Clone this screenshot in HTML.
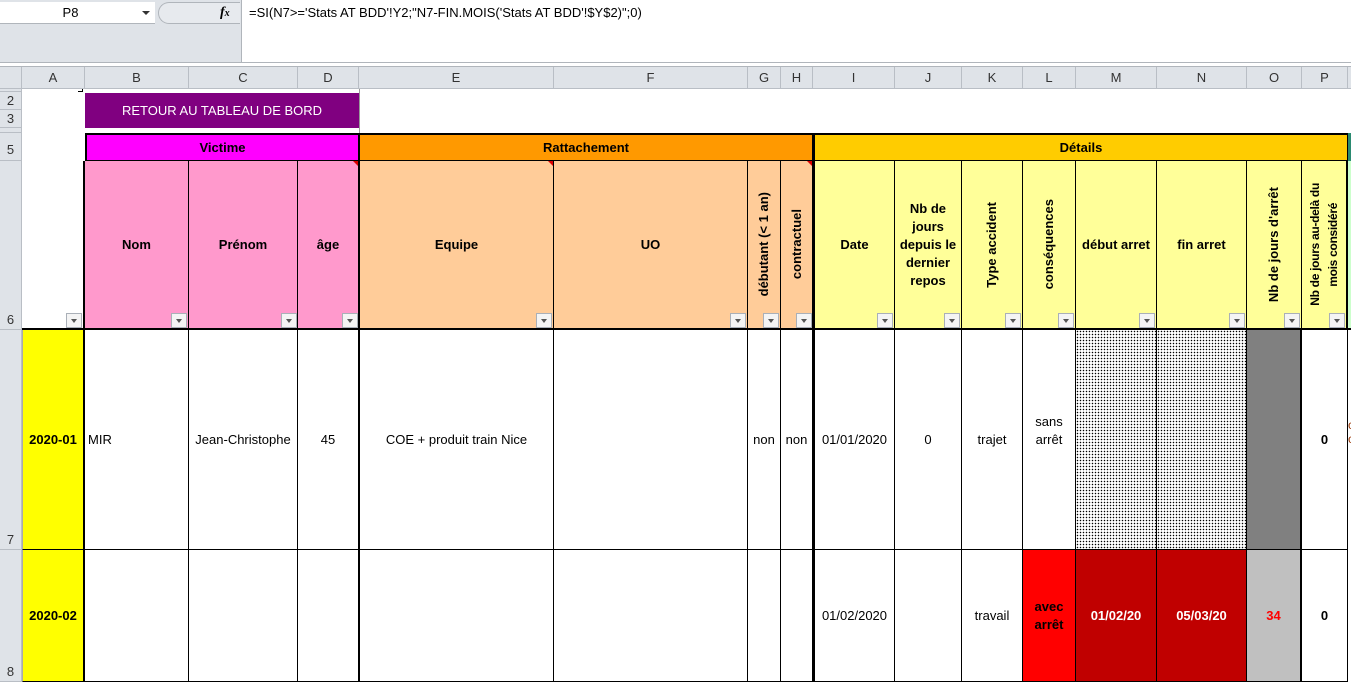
<!DOCTYPE html>
<html><head><meta charset="utf-8"><style>
*{margin:0;padding:0;box-sizing:border-box}
body{width:1351px;height:682px;overflow:hidden;background:#fff;position:relative;font-family:"Liberation Sans",Arial,sans-serif;font-size:13px;color:#000}
.a{position:absolute}
.c{position:absolute;display:flex;align-items:center;justify-content:center;text-align:center;border-right:1px solid #000;border-bottom:1px solid #000;line-height:18px}
.h{position:absolute;display:flex;align-items:center;justify-content:center;background:#dfe3e8;border-right:1px solid #b9bec5;border-bottom:1px solid #b9bec5;font-size:13px;color:#333}
.b{font-weight:bold}
.v{writing-mode:vertical-rl;transform:rotate(180deg);font-weight:bold;line-height:18px}
.dd{position:absolute;width:16px;height:15px;background:#f4f4f4;border:1px solid #aab0b8}
.dd:after{content:"";position:absolute;left:4px;top:5px;border-left:3px solid transparent;border-right:3px solid transparent;border-top:4px solid #555}
.dot{background-color:#fff;background-image:radial-gradient(#000 0.6px,transparent 0.9px);background-size:3px 3px}
.tri{position:absolute;width:0;height:0;border-left:5px solid transparent;border-top:5px solid #d00}
</style></head><body>
<div class="a" style="left:0;top:0;width:1351px;height:63px;background:#dfe3e8;border-bottom:1px solid #b0b5bb"></div>
<div class="a" style="left:0;top:2px;width:155px;height:22px;background:#fff;border-bottom:1px solid #b0b5bb;font-size:13px;text-align:center;line-height:22px;padding-right:14px">P8</div>
<div class="a" style="left:142px;top:11px;border-left:4px solid transparent;border-right:4px solid transparent;border-top:4px solid #333"></div>
<div class="a" style="left:158px;top:2px;width:82px;height:22px;background:#e7eaee;border-radius:11px 0 0 11px;border:1px solid #b0b5bb;border-right:none"></div>
<div class="a" style="left:220px;top:5px;font-family:'Liberation Serif',serif;font-style:italic;font-weight:bold;font-size:14px">f<span style="font-size:10px">x</span></div>
<div class="a" style="left:241px;top:0;width:1110px;height:63px;background:#fff;border-left:1px solid #b0b5bb;border-bottom:1px solid #b0b5bb;padding:5px 0 0 7px;font-size:13px">=SI(N7&gt;='Stats AT BDD'!Y2;"N7-FIN.MOIS('Stats AT BDD'!$Y$2)";0)</div>
<div class="a" style="left:0;top:63px;width:1351px;height:4px;background:#fff;border-bottom:1px solid #b0b5bb"></div>
<div class="h" style="left:0;top:67px;width:22px;height:22px"></div>
<div class="h" style="left:22px;top:67px;width:63px;height:22px">A</div>
<div class="h" style="left:85px;top:67px;width:104px;height:22px">B</div>
<div class="h" style="left:189px;top:67px;width:109px;height:22px">C</div>
<div class="h" style="left:298px;top:67px;width:61px;height:22px">D</div>
<div class="h" style="left:359px;top:67px;width:195px;height:22px">E</div>
<div class="h" style="left:554px;top:67px;width:194px;height:22px">F</div>
<div class="h" style="left:748px;top:67px;width:33px;height:22px">G</div>
<div class="h" style="left:781px;top:67px;width:32px;height:22px">H</div>
<div class="h" style="left:813px;top:67px;width:82px;height:22px">I</div>
<div class="h" style="left:895px;top:67px;width:67px;height:22px">J</div>
<div class="h" style="left:962px;top:67px;width:61px;height:22px">K</div>
<div class="h" style="left:1023px;top:67px;width:53px;height:22px">L</div>
<div class="h" style="left:1076px;top:67px;width:81px;height:22px">M</div>
<div class="h" style="left:1157px;top:67px;width:90px;height:22px">N</div>
<div class="h" style="left:1247px;top:67px;width:55px;height:22px">O</div>
<div class="h" style="left:1302px;top:67px;width:46px;height:22px">P</div>
<div class="h" style="left:1348px;top:67px;width:10px;height:22px"></div>
<div class="h" style="left:0;top:89px;width:22px;height:3px"></div>
<div class="h" style="left:0;top:92px;width:22px;height:18px">2</div>
<div class="h" style="left:0;top:110px;width:22px;height:18px">3</div>
<div class="h" style="left:0;top:128px;width:22px;height:5px"></div>
<div class="h" style="left:0;top:133px;width:22px;height:28px;padding-top:6px">5</div>
<div class="h" style="left:0;top:161px;width:22px;height:169px;align-items:flex-end;padding-bottom:2px">6</div>
<div class="h" style="left:0;top:330px;width:22px;height:220px;align-items:flex-end;padding-bottom:2px">7</div>
<div class="h" style="left:0;top:550px;width:22px;height:132px;align-items:flex-end;padding-bottom:2px">8</div>
<div class="a" style="left:359px;top:89px;width:1px;height:44px;background:#999"></div>
<div class="a" style="left:85px;top:93px;width:274px;height:35px;background:#800080;color:#fff;font-size:13px;display:flex;align-items:center;justify-content:center">RETOUR AU TABLEAU DE BORD</div>
<div class="a" style="left:78px;top:89px;width:5px;height:3px;border-bottom:1px solid #000;border-right:1px solid #000"></div>
<div class="c b" style="left:85px;top:133px;width:274px;height:28px;background:#ff00ff;border-top:2px solid #000;border-left:2px solid #000">Victime</div>
<div class="c b" style="left:359px;top:133px;width:454px;height:28px;background:#ff9900;border-top:2px solid #000;border-left:1px solid #000">Rattachement</div>
<div class="c b" style="left:813px;top:133px;width:535px;height:28px;background:#ffcc00;border-top:2px solid #000;border-left:2px solid #000">Détails</div>
<div class="a" style="left:1348px;top:133px;width:3px;height:28px;background:#2a8a70"></div>
<div class="c" style="left:22px;top:161px;width:63px;height:169px;border-right:2px solid #000;border-bottom:2px solid #000"></div>
<div class="c b" style="left:85px;top:161px;width:104px;height:169px;background:#ff99cc;border-bottom:2px solid #000">Nom</div>
<div class="c b" style="left:189px;top:161px;width:109px;height:169px;background:#ff99cc;border-bottom:2px solid #000">Prénom</div>
<div class="c b" style="left:298px;top:161px;width:61px;height:169px;background:#ff99cc;border-bottom:2px solid #000">âge</div>
<div class="c b" style="left:359px;top:161px;width:195px;height:169px;background:#ffcc99;border-left:1px solid #000;border-bottom:2px solid #000">Equipe</div>
<div class="c b" style="left:554px;top:161px;width:194px;height:169px;background:#ffcc99;border-bottom:2px solid #000">UO</div>
<div class="c" style="left:748px;top:161px;width:33px;height:169px;background:#ffcc99;border-bottom:2px solid #000"><span class="v">débutant (&lt; 1 an)</span></div>
<div class="c" style="left:781px;top:161px;width:32px;height:169px;background:#ffcc99;border-bottom:2px solid #000"><span class="v">contractuel</span></div>
<div class="c b" style="left:813px;top:161px;width:82px;height:169px;background:#ffff99;border-left:2px solid #000;border-bottom:2px solid #000">Date</div>
<div class="c b" style="left:895px;top:161px;width:67px;height:169px;background:#ffff99;border-bottom:2px solid #000">Nb de<br>jours<br>depuis le<br>dernier<br>repos</div>
<div class="c" style="left:962px;top:161px;width:61px;height:169px;background:#ffff99;border-bottom:2px solid #000"><span class="v">Type accident</span></div>
<div class="c" style="left:1023px;top:161px;width:53px;height:169px;background:#ffff99;border-bottom:2px solid #000"><span class="v">conséquences</span></div>
<div class="c b" style="left:1076px;top:161px;width:81px;height:169px;background:#ffff99;border-bottom:2px solid #000">début arret</div>
<div class="c b" style="left:1157px;top:161px;width:90px;height:169px;background:#ffff99;border-bottom:2px solid #000">fin arret</div>
<div class="c" style="left:1247px;top:161px;width:55px;height:169px;background:#ffff99;border-bottom:2px solid #000"><span class="v">Nb de jours d'arrêt</span></div>
<div class="c" style="left:1302px;top:161px;width:46px;height:169px;background:#ffff99;border-bottom:2px solid #000;border-right:2px solid #000"><span class="v" style="font-size:12px;letter-spacing:-0.3px">Nb de jours au-delà du<br>mois considéré</span></div>
<div class="a" style="left:1348px;top:161px;width:3px;height:169px;background:#ccffcc;border-bottom:2px solid #000"></div>
<div class="tri" style="left:353px;top:161px"></div><div class="tri" style="left:548px;top:161px"></div><div class="tri" style="left:807px;top:161px"></div>
<div class="dd" style="left:66px;top:313px"></div>
<div class="dd" style="left:171px;top:313px"></div>
<div class="dd" style="left:281px;top:313px"></div>
<div class="dd" style="left:342px;top:313px"></div>
<div class="dd" style="left:536px;top:313px"></div>
<div class="dd" style="left:730px;top:313px"></div>
<div class="dd" style="left:763px;top:313px"></div>
<div class="dd" style="left:796px;top:313px"></div>
<div class="dd" style="left:877px;top:313px"></div>
<div class="dd" style="left:944px;top:313px"></div>
<div class="dd" style="left:1005px;top:313px"></div>
<div class="dd" style="left:1058px;top:313px"></div>
<div class="dd" style="left:1139px;top:313px"></div>
<div class="dd" style="left:1229px;top:313px"></div>
<div class="dd" style="left:1284px;top:313px"></div>
<div class="dd" style="left:1329px;top:313px"></div>
<div class="c b" style="left:22px;top:330px;width:63px;height:220px;background:#ffff00;border-left:1px solid #aaa;border-right:2px solid #000">2020-01</div>
<div class="c" style="left:85px;top:330px;width:104px;height:220px;justify-content:flex-start;padding-left:3px">MIR</div>
<div class="c" style="left:189px;top:330px;width:109px;height:220px">Jean-Christophe</div>
<div class="c" style="left:298px;top:330px;width:61px;height:220px">45</div>
<div class="c" style="left:359px;top:330px;width:195px;height:220px;border-left:1px solid #000">COE + produit train Nice</div>
<div class="c" style="left:554px;top:330px;width:194px;height:220px"></div>
<div class="c" style="left:748px;top:330px;width:33px;height:220px">non</div>
<div class="c" style="left:781px;top:330px;width:32px;height:220px">non</div>
<div class="c" style="left:813px;top:330px;width:82px;height:220px;border-left:2px solid #000">01/01/2020</div>
<div class="c" style="left:895px;top:330px;width:67px;height:220px">0</div>
<div class="c" style="left:962px;top:330px;width:61px;height:220px">trajet</div>
<div class="c" style="left:1023px;top:330px;width:53px;height:220px;padding-bottom:18px">sans<br>arrêt</div>
<div class="c dot" style="left:1076px;top:330px;width:81px;height:220px"></div>
<div class="c dot" style="left:1157px;top:330px;width:90px;height:220px"></div>
<div class="c" style="left:1247px;top:330px;width:55px;height:220px;background:#808080;border-right:2px solid #000"></div>
<div class="c b" style="left:1302px;top:330px;width:46px;height:220px">0</div>
<div class="a" style="left:1348px;top:418px;font-size:12px;color:#993300">c<br>c</div>
<div class="c b" style="left:22px;top:550px;width:63px;height:132px;background:#ffff00;border-left:1px solid #aaa;border-right:2px solid #000">2020-02</div>
<div class="c" style="left:85px;top:550px;width:104px;height:132px"></div>
<div class="c" style="left:189px;top:550px;width:109px;height:132px"></div>
<div class="c" style="left:298px;top:550px;width:61px;height:132px"></div>
<div class="c" style="left:359px;top:550px;width:195px;height:132px;border-left:1px solid #000"></div>
<div class="c" style="left:554px;top:550px;width:194px;height:132px"></div>
<div class="c" style="left:748px;top:550px;width:33px;height:132px"></div>
<div class="c" style="left:781px;top:550px;width:32px;height:132px"></div>
<div class="c" style="left:813px;top:550px;width:82px;height:132px;border-left:2px solid #000">01/02/2020</div>
<div class="c" style="left:895px;top:550px;width:67px;height:132px"></div>
<div class="c" style="left:962px;top:550px;width:61px;height:132px">travail</div>
<div class="c b" style="left:1023px;top:550px;width:53px;height:132px;background:#ff0000">avec<br>arrêt</div>
<div class="c b" style="left:1076px;top:550px;width:81px;height:132px;background:#c00000;color:#fff">01/02/20</div>
<div class="c b" style="left:1157px;top:550px;width:90px;height:132px;background:#c00000;color:#fff">05/03/20</div>
<div class="c b" style="left:1247px;top:550px;width:55px;height:132px;background:#c0c0c0;color:#ff0000;border-right:2px solid #000">34</div>
<div class="c b" style="left:1302px;top:550px;width:46px;height:132px">0</div>
</body></html>
